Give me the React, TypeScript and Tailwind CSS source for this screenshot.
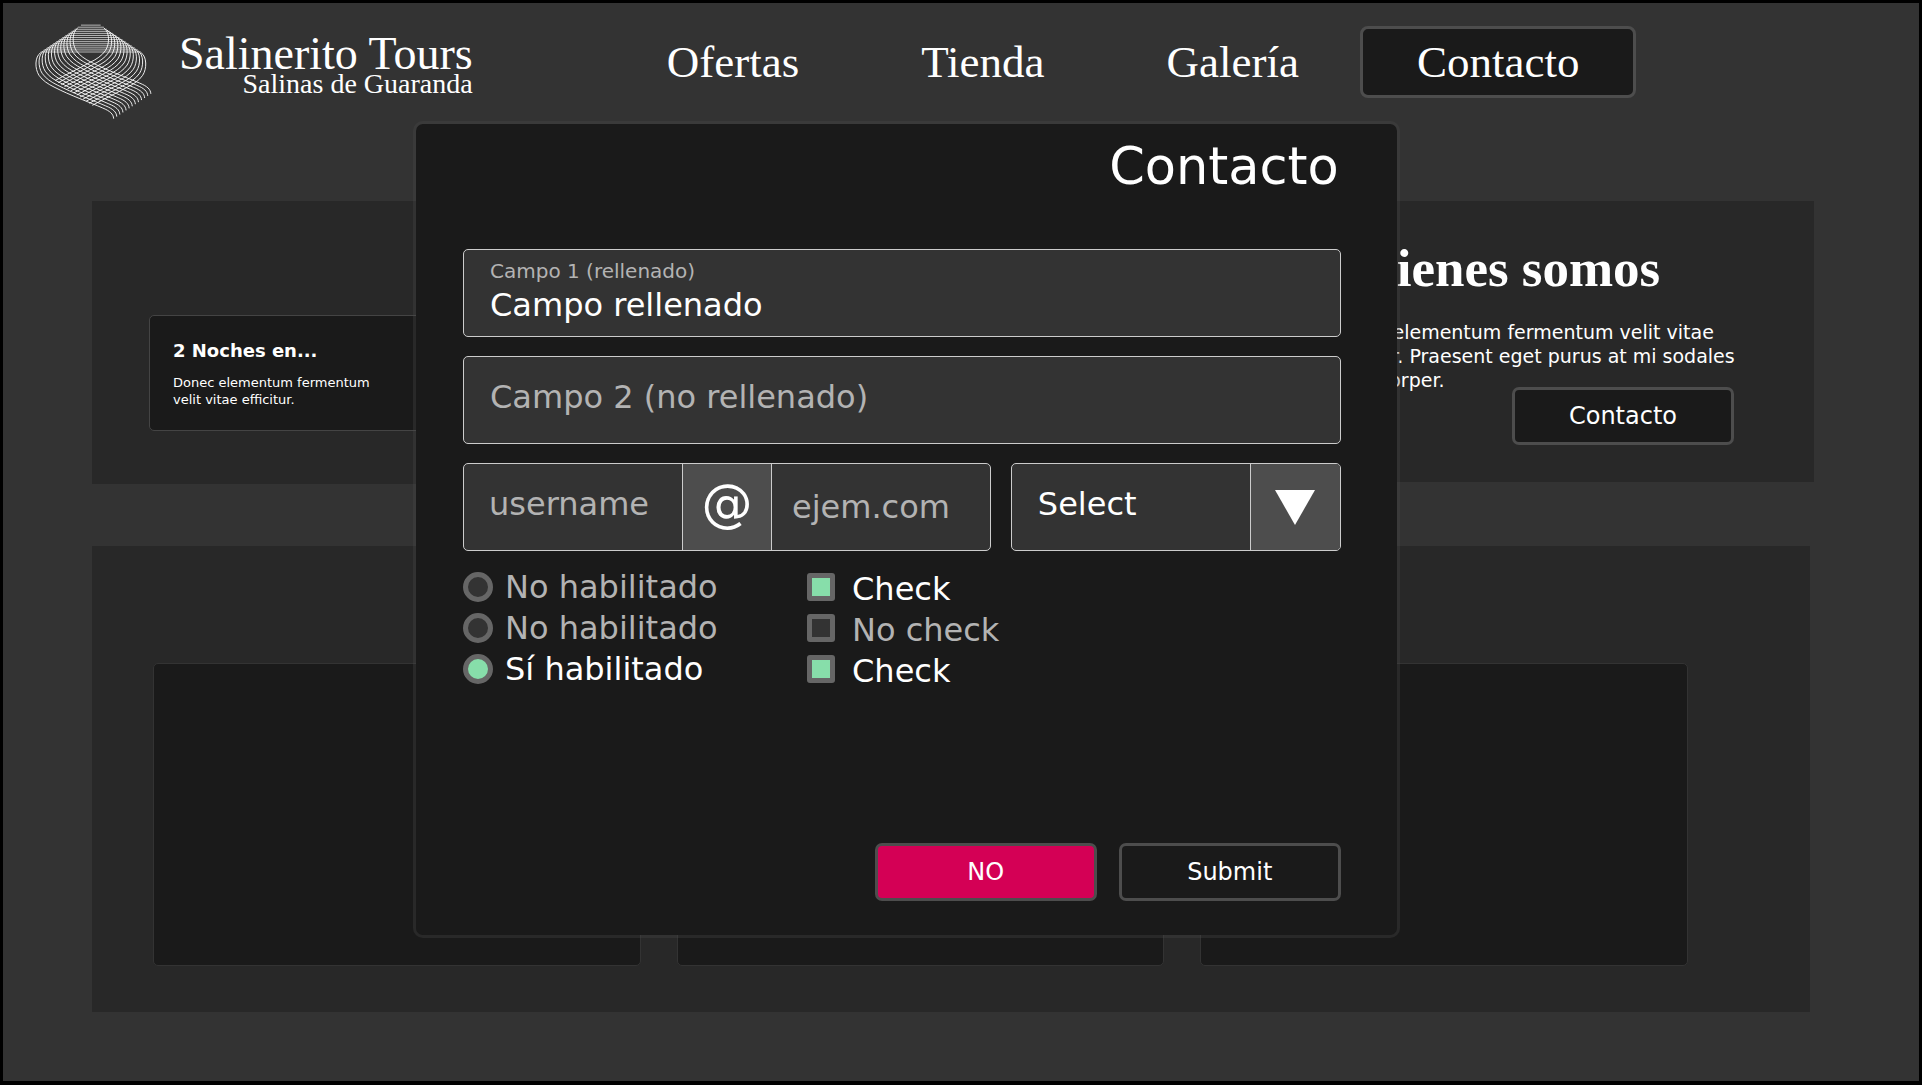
import React from "react";

const steps = Array.from({ length: 14 }, (_, i) => i);

function Logo() {
  return (
    <svg viewBox="45 38 354 288" className="h-24 w-[118px] shrink-0" fill="none" stroke="#fff" strokeWidth="3" strokeOpacity="0.9" aria-hidden="true">
      {steps.map((i) => (
        <path key={`h${i}`} d={`M${62 + 9.3 * i} ${122 - 6.2 * i}H${363 - 9.3 * i}`} strokeOpacity="0.65" />
      ))}
      {steps.slice(0, 13).map((i) => (
        <path
          key={`l${i}`}
          transform={`translate(${9.3 * i} ${-6.2 * i})`}
          d="M62 124C44 136 44 172 57 192C68 208 84 218 102 227C150 252 212 274 248 290C270 299 280 308 281 322"
        />
      ))}
      {steps.slice(0, 13).map((i) => (
        <path
          key={`r${i}`}
          transform={`translate(${-9.3 * i} ${-6.2 * i})`}
          d="M363 124C381 136 381 172 368 192C357 208 341 218 323 227C290 245 254 262 217 282"
        />
      ))}
    </svg>
  );
}

function Option({ type, name, label, checked = false }: { type: "radio" | "checkbox"; name: string; label: string; checked?: boolean }) {
  const radio = type === "radio";
  return (
    <label className={radio ? "flex h-[41px] items-center gap-3" : "flex h-[41px] items-center gap-[17px]"}>
      <input
        type={type}
        name={name}
        defaultChecked={checked}
        className={
          radio
            ? "peer size-[30px] appearance-none rounded-full border-[5px] border-[#666] bg-[#333] checked:bg-[#87deaa]"
            : "peer size-7 appearance-none rounded-[3px] border-[5px] border-[#666] bg-[#333] checked:bg-[#87deaa]"
        }
      />
      <span className={radio ? "leading-10 text-[#b3b3b3] peer-checked:text-white" : "pt-1 leading-10 text-[#b3b3b3] peer-checked:text-white"}>{label}</span>
    </label>
  );
}

const field = "rounded-[5px] border border-[#ccc] bg-[#333]";
const button = "h-[58px] w-[222px] rounded-[7px] border-[3px] border-[#4d4d4d] text-2xl text-white";
const navLink = "px-[61px]";

function ContactDialog() {
  return (
    <form
      role="dialog"
      aria-labelledby="contact-title"
      onSubmit={(e) => e.preventDefault()}
      className="absolute top-[118px] left-[21.4%] w-[51.5%] rounded-[10px] border-[3px] border-[#4d4d4d]/30 bg-[#1a1a1a] bg-clip-padding pt-[13px] pr-14 pb-[34px] pl-[47px] text-[32px]"
    >
      <h2 id="contact-title" className="pr-[2px] text-right text-[51px] leading-[60px]">Contacto</h2>

      <div className="mt-[52px] grid gap-[19px]">
        <label className={`${field} flex h-[88px] flex-col px-[26px] pt-[9px]`}>
          <span className="text-xl leading-6 text-[#b3b3b3]">Campo 1 (rellenado)</span>
          <input type="text" defaultValue="Campo rellenado" className="h-11 w-full bg-transparent leading-10 outline-none" />
        </label>
        <input
          type="text"
          aria-label="Campo 2"
          placeholder="Campo 2 (no rellenado)"
          className={`${field} h-[88px] w-full px-[26px] pb-1.5 outline-none placeholder:text-[#b3b3b3]`}
        />
        <div className="grid grid-cols-[8fr_5fr] gap-5">
          <div className={`${field} flex h-[88px] overflow-hidden`}>
            <input type="text" aria-label="Usuario" placeholder="username" className="w-0 flex-1 bg-transparent pb-1.5 pl-[25px] outline-none placeholder:text-[#b3b3b3]" />
            <span className="flex w-[90px] items-center justify-center border-x border-[#ccc] bg-[#4d4d4d] pb-1.5 text-[51px]">@</span>
            <input type="text" aria-label="Dominio" placeholder="ejem.com" className="w-0 flex-1 bg-transparent pr-[5px] pl-5 outline-none placeholder:text-[#b3b3b3]" />
          </div>
          <div className={`${field} flex h-[88px] overflow-hidden`}>
            <select aria-label="Select" className="w-0 flex-1 appearance-none bg-transparent pb-1.5 pl-[26px] outline-none">
              <option>Select</option>
            </select>
            <span className="pointer-events-none flex w-[90px] items-center justify-center border-l border-[#ccc] bg-[#4d4d4d]">
              <svg viewBox="0 0 40 35" className="w-10" fill="#fff" aria-hidden="true">
                <path d="M0 0H40L20 35Z" />
              </svg>
            </span>
          </div>
        </div>
      </div>

      <div className="mt-[15px] grid grid-cols-[344px_1fr]">
        <div>
          <Option type="radio" name="estado" label="No habilitado" />
          <Option type="radio" name="estado" label="No habilitado" />
          <Option type="radio" name="estado" label="Sí habilitado" checked />
        </div>
        <div>
          <Option type="checkbox" name="check-1" label="Check" checked />
          <Option type="checkbox" name="check-2" label="No check" />
          <Option type="checkbox" name="check-3" label="Check" checked />
        </div>
      </div>

      <div className="mt-[154px] flex justify-end gap-[22px]">
        <button type="button" className={`${button} bg-[#d40055]`}>NO</button>
        <button type="submit" className={`${button} bg-[#1a1a1a]`}>Submit</button>
      </div>
    </form>
  );
}

export default function App() {
  return (
    <div className="relative min-h-screen border-[3px] border-b-4 border-black bg-[#333] font-['DejaVu_Sans',sans-serif] text-white">
      <header className="flex items-start pl-8 font-['Liberation_Serif',serif]">
        <a href="#" className="flex items-start gap-[26px] pt-[21px]">
          <Logo />
          <span className="flex flex-col pt-3 text-right">
            <span className="text-[46px] leading-9">Salinerito Tours</span>
            <span className="text-[28px] leading-6">Salinas de Guaranda</span>
          </span>
        </a>
        <nav className="mt-[23px] mr-[15%] ml-auto flex h-[72px] items-center text-[45px] leading-none">
          <a href="#ofertas" className={navLink}>Ofertas</a>
          <a href="#tienda" className={navLink}>Tienda</a>
          <a href="#galeria" className={navLink}>Galería</a>
          <a href="#contacto" aria-current="page" className="flex h-full items-center rounded-lg border-[3px] border-[#4d4d4d] bg-[#1a1a1a] px-[54px]">Contacto</a>
        </nav>
      </header>

      <main className="mt-[81px] pr-[105px] pb-[69px] pl-[89px]">
        <div className="grid grid-cols-3 items-start">
          <section className="col-span-2 bg-[#282828] pt-[114px] pb-[53px] pl-[57px]">
            <article className="w-[340px] rounded-[5px] border border-[#444] bg-[#1a1a1a] px-[23px] pt-[23px] pb-[22px]">
              <h3 className="text-lg leading-6 font-bold">2 Noches en...</h3>
              <p className="mt-[11px] text-[13px] leading-[17px]">
                Donec elementum fermentum
                <br />
                velit vitae efficitur.
              </p>
            </article>
          </section>
          <section className="flex flex-col bg-[#282828] pt-[37px] pr-20 pb-[37px] pl-[86px]">
            <h2 className="font-['Liberation_Serif',serif] text-[53px] leading-[60px] font-bold whitespace-nowrap">Quienes somos</h2>
            <p className="mt-[22px] text-[19px] leading-6 whitespace-nowrap">
              Donec elementum fermentum velit vitae
              <br />
              efficitur. Praesent eget purus at mi sodales
              <br />
              ullamcorper.
            </p>
            <button type="button" className={`${button} -mt-[5px] self-end bg-[#1a1a1a]`}>Contacto</button>
          </section>
        </div>
        <section className="mt-[62px] mr-1 grid grid-cols-3 gap-9 bg-[#282828] pt-[117px] pr-[122px] pb-[46px] pl-[61px]">
          <article className="h-[303px] rounded-[5px] border border-[#333] bg-[#1a1a1a]" />
          <article className="h-[303px] rounded-[5px] border border-[#333] bg-[#1a1a1a]" />
          <article className="h-[303px] rounded-[5px] border border-[#333] bg-[#1a1a1a]" />
        </section>
      </main>

      <ContactDialog />
    </div>
  );
}
